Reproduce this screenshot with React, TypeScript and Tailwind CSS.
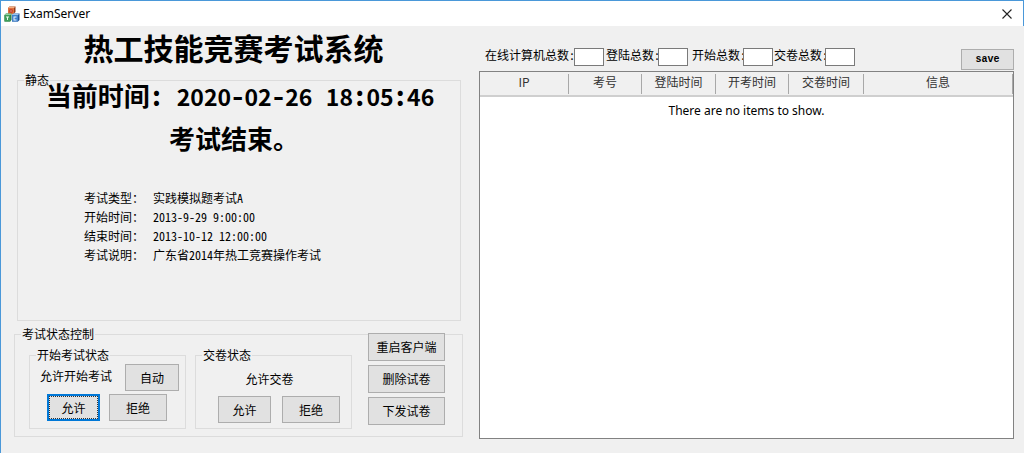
import React from 'react';

const columns = ['IP', '考号', '登陆时间', '开考时间', '交卷时间', '信息'];

const currentTime = ': 2020-02-26 18:05:46';

const details = [
  { label: '考试类型：', value: '实践模拟题考试A' },
  { label: '开始时间：', value: '2013-9-29 9:00:00' },
  { label: '结束时间：', value: '2013-10-12 12:00:00' },
  { label: '考试说明：', value: '广东省2014年热工竞赛操作考试' },
];

const counters = [
  { id: 'online', label: '在线计算机总数:', className: 'w-[89px]' },
  { id: 'login', label: '登陆总数:', className: 'ml-0.5 w-[52px]' },
  { id: 'start', label: '开始总数:', className: 'ml-1 w-[51px]' },
  { id: 'submit', label: '交卷总数:', className: 'ml-px w-[51px]' },
];

const AppIcon: React.FC = () => (
  <svg width="16" height="16" viewBox="0 0 16 16" aria-hidden="true">
    <path d="M4 2l1.500-1.500h6V6L10 7.500H4z" fill="#8c3a1c" />
    <rect x="4" y="2" width="6" height="6" fill="#e0703c" />
    <path d="M4 2l1.500-1.500h6L10 2z" fill="#f4b083" />
    <path d="M5.500 3.500h3v3h-3z" fill="#b3261e" />
    <path d="M6.500 4.200h1v1.500h-1z" fill="#f8d0b8" />
    <path d="M0.500 9L2 7.500h5.500V14L6 15.500H0.500z" fill="#1f6b3a" />
    <rect x="0.500" y="9" width="6" height="6.500" fill="#3f9e5a" />
    <path d="M0.500 9L2 7.500h5.500L6.500 9z" fill="#93d0a0" />
    <path d="M2 10.500h3v1H4v2.500H3v-2.500H2z" fill="#e8f8ea" />
    <path d="M8 9l1.500-1.500h6V14L14 15.500H8z" fill="#1d4f94" />
    <rect x="8" y="9" width="6" height="6.500" fill="#3f82cc" />
    <path d="M8 9l1.500-1.500h6L14 9z" fill="#9cc4ee" />
    <path d="M9.500 10.500h3v1h-2v2h2v1h-3z" fill="#eaf4ff" />
  </svg>
);

type ButtonProps = {
  children: React.ReactNode;
  className?: string;
  focused?: boolean;
};

const Button: React.FC<ButtonProps> = ({ children, className = '', focused = false }) => (
  <button
    type="button"
    className={`bg-[#e1e1e1] text-center leading-4 ${
      focused
        ? 'border-2 border-[#0078d7] outline-1 -outline-offset-3 outline-dotted outline-[#333]'
        : 'border border-[#adadad]'
    } ${className}`}
  >
    {children}
  </button>
);

type GroupProps = {
  title: string;
  children: React.ReactNode;
  className?: string;
};

const Group: React.FC<GroupProps> = ({ title, children, className = '' }) => (
  <fieldset className={`border border-[#dcdcdc] ${className}`}>
    <legend className="ml-1.5 px-px leading-4">{title}</legend>
    {children}
  </fieldset>
);

const Clock: React.FC<{ value: string }> = ({ value }) => (
  <span className="text-[27px]">
    {value.split(/(\d+)/).map((part, i) =>
      /\d/.test(part) ? (
        <span key={i} className="text-[23px] [font-feature-settings:normal]">
          {part}
        </span>
      ) : (
        part
      )
    )}
  </span>
);

const App: React.FC = () => {
  return (
    <div className="flex min-h-screen flex-col border-t border-l border-[#4a98d9] bg-[#f0f0f0] font-['Noto_Sans_CJK_SC',sans-serif] text-xs text-black [font-feature-settings:'hwid']">
      {/* Title bar */}
      <header className="flex h-[25px] items-center justify-between border-r border-[#4a98d9] bg-white pr-2.5 pl-[3px]">
        <div className="flex items-center gap-[3px]">
          <AppIcon />
          <span className="font-['Noto_Sans',sans-serif] text-xs [font-feature-settings:normal]">ExamServer</span>
        </div>
        <button type="button" aria-label="Close">
          <svg width="12" height="12" viewBox="0 0 12 12" stroke="#222" strokeWidth="1.100">
            <path d="M1.500 1.500l9 9M10.500 1.500l-9 9" />
          </svg>
        </button>
      </header>

      <main className="flex flex-1 pr-2.5 pb-3.5">
        {/* Left: exam info and controls */}
        <section className="w-[478px] shrink-0 pr-4 pl-[13px]">
          <h1 className="mt-[5px] mb-[9px] pr-2.5 text-center text-[30px] leading-8 font-bold">
            热工技能竞赛考试系统
          </h1>

          <Group title="静态" className="mr-0.5 ml-[3px] pb-14">
            <p className="-mt-1.5 pl-0.5 text-center text-[26px] leading-[26px] font-bold whitespace-nowrap">
              当前时间
              <Clock value={currentTime} />
            </p>
            <p className="mt-4 pr-2.5 text-center text-[26px] leading-[26px] font-bold">考试结束。</p>
            <dl className="mt-[37px] grid grid-cols-[69px_1fr] pl-[66px] leading-[19px]">
              {details.map((item) => (
                <React.Fragment key={item.label}>
                  <dt>{item.label}</dt>
                  <dd>{item.value}</dd>
                </React.Fragment>
              ))}
            </dl>
          </Group>

          <Group title="考试状态控制" className="mt-[5px] pb-[7px]">
            <div className="flex items-start pl-3.5">
              <Group title="开始考试状态" className="mt-[5px] w-[157px] pb-[7px]">
                <div className="mt-px flex justify-between pr-1.5 pl-2.5">
                  <span className="leading-6">允许开始考试</span>
                  <Button className="h-[27px] w-[54px]">自动</Button>
                </div>
                <div className="mt-[3px] flex gap-[9px] pl-[17px]">
                  <Button focused className="h-[27px] w-[53px]">允许</Button>
                  <Button className="h-[27px] w-[58px]">拒绝</Button>
                </div>
              </Group>

              <Group title="交卷状态" className="mt-[5px] ml-[9px] w-[157px] pb-[5px]">
                <p className="mt-2 pr-2 text-center leading-4">允许交卷</p>
                <div className="mt-[9px] flex gap-[11px] pl-[22px]">
                  <Button className="h-[27px] w-[53px]">允许</Button>
                  <Button className="h-[27px] w-[58px]">拒绝</Button>
                </div>
              </Group>

              <div className="relative -mt-[9px] ml-4 flex flex-col gap-1">
                <Button className="h-7 w-[77px]">重启客户端</Button>
                <Button className="h-7 w-[77px]">删除试卷</Button>
                <Button className="h-7 w-[77px]">下发试卷</Button>
              </div>
            </div>
          </Group>
        </section>

        {/* Right: connected clients */}
        <section className="flex min-w-0 flex-1 flex-col">
          <div className="mt-[22px] flex items-start pl-1.5">
            {counters.map((item) => (
              <React.Fragment key={item.id}>
                <label htmlFor={item.id} className={`shrink-0 leading-3.5 whitespace-nowrap ${item.className}`}>
                  {item.label}
                </label>
                <input id={item.id} type="text" className="h-[18px] w-[30px] shrink-0 border border-[#7a7a7a] bg-white" />
              </React.Fragment>
            ))}
            <Button className="mt-px ml-auto h-[21px] w-[53px] font-['Liberation_Mono',monospace] text-[10px] font-bold">
              save
            </Button>
          </div>

          <div className="mt-px flex-1 border border-[#828282] bg-white">
            <table className="w-full table-fixed border-collapse">
              <colgroup>
                <col className="w-[89px]" />
                <col className="w-[73px]" />
                <col className="w-[74px]" />
                <col className="w-[73px]" />
                <col className="w-[75px]" />
                <col />
              </colgroup>
              <thead>
                <tr className="border-b-2 border-[#cfcfcf] bg-[#f0f0f0] text-[#333]">
                  {columns.map((name) => (
                    <th key={name} className="h-6 p-0 font-normal [font-feature-settings:normal]">
                      <div className="border-r border-[#a8a8a8] pb-1 leading-4">{name}</div>
                    </th>
                  ))}
                </tr>
              </thead>
              <tbody>
                <tr>
                  <td
                    colSpan={6}
                    className="pt-1.5 text-center font-['Noto_Sans',sans-serif] leading-4 [font-feature-settings:normal]"
                  >
                    There are no items to show.
                  </td>
                </tr>
              </tbody>
            </table>
          </div>
        </section>
      </main>
    </div>
  );
};

export default App;
